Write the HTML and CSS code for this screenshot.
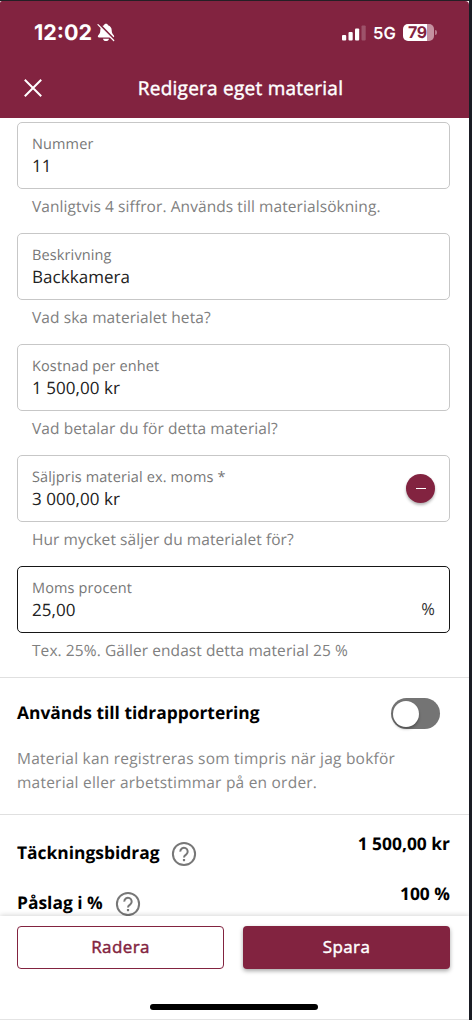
FILE: index.html
```html
<!DOCTYPE html>
<html lang="sv">
<head>
<meta charset="utf-8">
<title>Redigera eget material</title>
<link rel="stylesheet" href="styles.css">
</head>
<body>
<div class="screen">
  <header class="top">
    <div class="status">
      <span class="clock">12:02</span>
      <svg class="bell" width="18" height="19" viewBox="0 0 18 19">
        <path d="M9 .8c1.100 0 1.800.6 2 1.400 2.400.8 3.700 2.600 3.700 5.100 0 2.800.8 3.800 2 5 .9.900.5 2.100-.8 2.100H2.100c-1.300 0-1.700-1.200-.8-2.100 1.200-1.200 2-2.200 2-5 0-2.500 1.300-4.300 3.700-5.100.2-.8.900-1.400 2-1.400zM6 15.700h6c-.2 1.400-1.400 2.400-3 2.400s-2.800-1-3-2.400z" fill="#fff"/>
        <path d="M1.800.8L18 17.200" stroke="#822340" stroke-width="2.200"/>
        <path d="M1 1.600L16.700 17.500" stroke="#fff" stroke-width="1.300" stroke-linecap="round"/>
      </svg>
      <svg class="signal" width="24" height="16" viewBox="0 0 24 16" fill="#fff">
        <rect x="0" y="10" width="4.200" height="5.500" rx="1"/>
        <rect x="6.500" y="7" width="4.200" height="8.500" rx="1"/>
        <rect x="13" y="3.500" width="4.200" height="12" rx="1"/>
        <rect x="19.500" y="0.500" width="4.200" height="15" rx="1" opacity=".22"/>
      </svg>
      <span class="network">5G</span>
      <span class="battery"><span class="level">79</span></span>
      <span class="nub"></span>
    </div>
    <div class="bar">
      <svg class="close" width="18" height="18" viewBox="0 0 18 18"><path d="M1.500 1.500l15 15M16.500 1.500l-15 15" stroke="#fff" stroke-width="2" stroke-linecap="square"/></svg>
      <h1 class="title">Redigera eget material</h1>
    </div>
  </header>
  <main class="content">
    <section class="fields">
      <div class="field">
        <div class="box"><div class="texts"><span class="label">Nummer</span><span class="value">11</span></div></div>
        <div class="hint">Vanligtvis 4 siffror. Används till materialsökning.</div>
      </div>
      <div class="field">
        <div class="box"><div class="texts"><span class="label">Beskrivning</span><span class="value">Backkamera</span></div></div>
        <div class="hint">Vad ska materialet heta?</div>
      </div>
      <div class="field">
        <div class="box"><div class="texts"><span class="label">Kostnad per enhet</span><span class="value">1 500,00 kr</span></div></div>
        <div class="hint">Vad betalar du för detta material?</div>
      </div>
      <div class="field">
        <div class="box"><div class="texts"><span class="label">Säljpris material ex. moms *</span><span class="value">3 000,00 kr</span></div>
          <span class="minus"><span class="dash"></span></span></div>
        <div class="hint">Hur mycket säljer du materialet för?</div>
      </div>
      <div class="field">
        <div class="box focused"><div class="texts"><span class="label">Moms procent</span><span class="value">25,00</span></div>
          <span class="unit">%</span></div>
        <div class="hint">Tex. 25%. Gäller endast detta material 25 %</div>
      </div>
    </section>
    <section class="time">
      <div class="time-row"><h2 class="strong">Används till tidrapportering</h2><span class="switch"><span class="knob"></span></span></div>
      <p class="note">Material kan registreras som timpris när jag bokför<br>material eller arbetstimmar på en order.</p>
    </section>
    <section class="totals">
      <div class="total">
        <span class="strong">Täckningsbidrag</span>
        <svg class="help" width="26" height="26" viewBox="0 0 26 26" fill="none" stroke="#777" stroke-width="2"><circle cx="13" cy="13" r="11.100"/><path d="M9.300 10.600a3.700 3.700 0 1 1 6 2.800c-1.400 1-2.300 1.500-2.300 3.100"/><path d="M13 18v2.200" stroke-width="2.200"/></svg>
        <span class="strong amount">1 500,00 kr</span>
      </div>
      <div class="total">
        <span class="strong">Påslag i %</span>
        <svg class="help" width="26" height="26" viewBox="0 0 26 26" fill="none" stroke="#777" stroke-width="2"><circle cx="13" cy="13" r="11.100"/><path d="M9.300 10.600a3.700 3.700 0 1 1 6 2.800c-1.400 1-2.300 1.500-2.300 3.100"/><path d="M13 18v2.200" stroke-width="2.200"/></svg>
        <span class="strong amount">100 %</span>
      </div>
    </section>
  </main>
  <footer class="actions">
    <div class="buttons">
      <button class="button outline">Radera</button>
      <button class="button solid">Spara</button>
    </div>
    <div class="home"></div>
  </footer>
</div>
</body>
</html>
```

FILE: styles.css
```css
* { box-sizing: border-box; }
body { margin: 0; background: #1a1c24; font-family: "Open Sans", sans-serif; text-rendering: geometricPrecision; }
.screen {
  width: 469px; height: 1020px; border-top: 1px solid #241f25;
  border-bottom: 1px solid #e4e4e4; background: #fff;
  display: flex; flex-direction: column; overflow: hidden;
}
.top { flex: none; height: 117px; background: #822340; color: #fff; border-radius: 2px 4px 0 0; }
.status {
  height: 57px; padding: 6px 32px 0 34px; display: flex; align-items: center;
  font-family: Inter, sans-serif; font-weight: 700;
}
.clock { font-size: 21.500px; width: 59px; white-space: nowrap; }
.bell { margin-left: 4px; }
.signal { margin-left: auto; }
.network { font-size: 16.500px; font-weight: 600; margin-left: 7px; width: 23px; }
.battery {
  margin-left: 7px; width: 31px; height: 17px; border-radius: 5px;
  background: linear-gradient(90deg, #fff 24px, #c592a1 24px); color: #822340;
  font-size: 16px; line-height: 17px; text-align: center; white-space: nowrap;
}
.level { letter-spacing: -.3px; margin-right: 2px; }
.nub { width: 2px; height: 5px; margin-left: 1px; background: #b77b8d; border-radius: 0 2px 2px 0; }
.bar { height: 60px; display: grid; grid-template-columns: 65px 1fr 53px; align-items: center; }
.close { margin-left: 24px; }
.title {
  margin: 0; font-size: 19px; font-weight: 400; letter-spacing: .25px;
  -webkit-text-stroke: .45px currentColor; text-align: center; white-space: nowrap;
}
.content { flex: 1; min-height: 0; overflow: hidden; }
.fields { height: 560px; padding: 4px 19px 0 17px; border-bottom: 1px solid #e0e0e0; }
.field { height: 111px; }
.box {
  height: 67px; border: 1px solid #c7c7c7; border-radius: 5px; padding: 0 14px;
  display: flex; align-items: center; justify-content: space-between;
}
.focused { border-color: #161616; }
.texts { display: flex; flex-direction: column; white-space: nowrap; padding-bottom: 1px; }
.label { font-size: 14.500px; line-height: 21px; color: #777; letter-spacing: .13px; }
.value { font-size: 17px; line-height: 22px; color: #222; letter-spacing: .05px; }
.unit { font-size: 16.500px; color: #333; margin-top: 18px; }
.hint { padding: 6px 0 0 15px; font-size: 15.500px; line-height: 22px; color: #808080; letter-spacing: .08px; white-space: nowrap; }
.minus {
  width: 29px; height: 29px; border-radius: 50%; background: #822340;
  display: grid; place-items: center; box-shadow: 0 2px 3px rgba(0,0,0,.3);
}
.dash { width: 10px; height: 1.500px; background: #fff; }
.time { height: 137px; padding: 15px 29px 0 17px; border-bottom: 1px solid #e0e0e0; }
.time-row { height: 40px; display: flex; align-items: center; justify-content: space-between; }
.strong { margin: 0; font-size: 17.400px; font-weight: 700; line-height: 24px; color: #000; white-space: nowrap; }
.switch { width: 49px; height: 31px; border-radius: 16px; background: #747474; padding: 3px 2px; }
.knob { display: block; width: 26px; height: 26px; border-radius: 50%; background: #fff; box-shadow: 0 2px 3px rgba(0,0,0,.3); }
.note { margin: 13px 0 0; font-size: 15.500px; line-height: 24px; color: #858585; letter-spacing: .22px; white-space: nowrap; }
.totals { padding: 13px 19px 0 17px; }
.total { height: 50px; display: flex; align-items: center; }
.help { margin-left: 12px; margin-top: 2px; }
.amount { margin-left: auto; margin-top: -18px; }
.actions {
  flex: none; height: 103px; background: #fff; padding: 10px 19px 0 17px; position: relative;
  box-shadow: 0 -1px 5px rgba(0,0,0,.16);
}
.buttons { display: grid; grid-template-columns: 207px 207px; gap: 19px; }
.button {
  height: 43px; padding: 0 0 2px; border: 0; border-radius: 4px; font: 400 17px "Open Sans", sans-serif;
  letter-spacing: .4px; -webkit-text-stroke: .45px currentColor;
}
.outline { border: 1px solid #822340; background: #fff; color: #822340; }
.solid { background: #822340; color: #fff; box-shadow: 0 2px 4px rgba(0,0,0,.35); }
.home { width: 168px; height: 6px; border-radius: 3px; background: #000; margin: 35px 0 0 133px; }
```
